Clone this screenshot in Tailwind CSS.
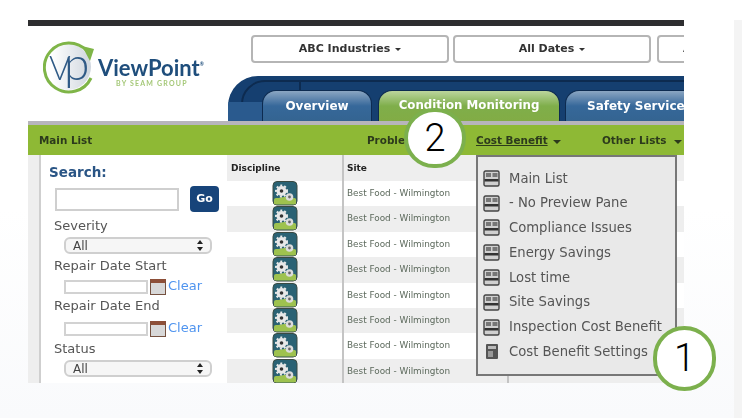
<!DOCTYPE html>
<html>
<head>
<meta charset="utf-8">
<script src="https://cdn.jsdelivr.net/npm/@tailwindcss/browser@4"></script>
</head>
<body class="w-[742px] h-[418px] overflow-hidden relative bg-gradient-to-b from-white via-white to-[#f9fafc] font-['DejaVu_Sans',sans-serif]">
<div class="flex pt-[20px] pl-[28px] h-full">
  <!-- screenshot -->
  <div class="w-[656px] h-[363px] overflow-hidden bg-white flex flex-col blur-[0.6px] relative shrink-0">
    <div class="h-[6px] bg-[#2e2e30] shrink-0"></div>
    <!-- header -->
    <div class="h-[95px] flex shrink-0">
      <div class="w-[200px] shrink-0 pl-[15px] pt-[14px]">
        <svg width="170" height="56" viewBox="0 0 170 56">
          <defs><linearGradient id="lg" x1="0" x2="1" y1="0" y2="0"><stop offset="0.15" stop-color="#ffffff"/><stop offset="1" stop-color="#cfd6de"/></linearGradient></defs>
          <circle cx="25" cy="27" r="23" fill="url(#lg)"/>
          <path d="M44 11 A24.5 24.5 0 1 0 48 38" fill="none" stroke="#7fb548" stroke-width="3"/>
          <path d="M39 6 L51 9 L47 21 Z" fill="#7fb548"/>
          <text x="6" y="40" font-family="Lato" font-weight="300" font-size="33" fill="#2f5a86">V</text>
          <text x="21" y="40" font-family="Lato" font-weight="300" font-size="46" fill="#2f5a86">p</text>
          <text x="55" y="36" font-family="Lato" font-weight="700" font-size="22" fill="#1f4e7c">ViewPoint<tspan font-size="5" dy="-10">®</tspan></text>
          <text x="73" y="46" font-family="Lato" font-weight="700" font-size="7" letter-spacing="1.2" fill="#a5c878">BY SEAM GROUP</text>
        </svg>
      </div>
      <div class="flex-1 min-w-0 flex flex-col">
        <div class="flex gap-[4px] pl-[23px] pt-[9px]">
          <div class="w-[198px] h-[28px] pt-[1px] shrink-0 border-2 border-[#b5b5b5] rounded-[4px] flex items-center justify-center gap-[5px] text-[11px] font-bold text-[#333]">ABC Industries<span class="w-0 h-0 border-x-[3px] border-x-transparent border-t-[3px] border-t-[#333]"></span></div>
          <div class="w-[198px] h-[28px] pt-[1px] shrink-0 border-2 border-[#b5b5b5] rounded-[4px] flex items-center justify-center gap-[5px] text-[11px] font-bold text-[#333]">All Dates<span class="w-0 h-0 border-x-[3px] border-x-transparent border-t-[3px] border-t-[#333]"></span></div>
          <div class="w-[100px] h-[28px] pt-[1px] shrink-0 ml-[2px] border-2 border-[#b5b5b5] rounded-[4px] flex items-center pl-[24px] text-[11px] font-bold text-[#333] whitespace-nowrap">All</div>
        </div>
        <div class="mt-[13px] flex-1 bg-[#153f70] rounded-tl-[30px] relative overflow-hidden">
          <div class="absolute left-[13px] top-[4px] w-[60px] h-[60px] border-2 border-[#0d2b50] rounded-tl-[24px]"></div>
          <div class="absolute left-0 right-0 top-[4px] h-[2px] bg-[#0d2b50] ml-[36px]"></div>
          <div class="absolute left-0 bottom-0 w-[36px] h-[19px] bg-[#2a5a8e]"></div>
          <div class="absolute left-[34px] bottom-0 flex items-end w-[460px]">
            <div class="w-[110px] h-[31px] shrink-0 rounded-t-[14px] border border-[#0d2b50] border-b-0 bg-gradient-to-b from-[#8ba6c2] via-[#36689a] to-[#346491] flex items-center justify-center text-white text-[12px] font-bold">Overview</div>
            <div class="w-[182px] h-[31px] ml-[6px] shrink-0 rounded-t-[14px] border border-[#0d2b50] border-b-0 bg-gradient-to-b from-[#bcd59c] via-[#7fae4a] to-[#82ac45] flex items-center justify-center text-white text-[11.8px] font-bold">Condition Monitoring</div>
            <div class="w-[150px] h-[31px] ml-[5px] shrink-0 rounded-t-[14px] border border-[#0d2b50] border-b-0 bg-gradient-to-b from-[#8ba6c2] via-[#36689a] to-[#346491] flex items-center pl-[21px] text-white text-[12px] font-bold whitespace-nowrap">Safety Services</div>
          </div>
        </div>
      </div>
    </div>
    <!-- green bar -->
    <div class="h-[4px] bg-[#b7b5bb] shrink-0"></div>
    <div class="h-[30px] bg-[#8eb935] shrink-0 relative flex items-center pl-[11px] pt-[2px] text-[10.4px] font-bold text-[#2c3a1c]">
      <span>Main List</span>
      <span class="absolute left-[339px]">Problems</span>
      <span class="absolute left-[448px] underline">Cost Benefit</span>
      <span class="absolute left-[525px] top-[15px] w-0 h-0 border-x-[4px] border-x-transparent border-t-[4px] border-t-[#2c3a1c]"></span>
      <span class="absolute left-[574px]">Other Lists</span>
      <span class="absolute left-[646px] top-[15px] w-0 h-0 border-x-[4px] border-x-transparent border-t-[4px] border-t-[#2c3a1c]"></span>
    </div>
    <!-- body -->
    <div class="flex-1 flex min-h-0">
      <div class="w-[13px] bg-[#eeeeee] border-r-2 border-[#cfcfcf] shrink-0"></div>
      <aside class="w-[186px] shrink-0 pl-[13px] pt-[8px] text-[13px] text-[#555] leading-[16px] overflow-hidden">
        <div class="text-[13.5px] font-bold text-[#2a5585] leading-[18px] ml-[-5px]">Search:</div>
        <div class="flex items-center gap-[11px] mt-[5px] h-[26px] ml-[1px]">
          <div class="w-[124px] h-[23px] border-2 border-[#cfcfcf] bg-white shrink-0"></div>
          <div class="w-[29px] h-[26px] rounded-[4px] bg-[#17447a] text-white text-[11px] font-bold flex items-center justify-center shrink-0">Go</div>
        </div>
        <div class="mt-[6px]">Severity</div>
        <div class="ml-[10px] mt-[3px] w-[148px] h-[17px] rounded-[6px] border-2 border-[#cfcfcf] bg-[#f6f6f6] flex items-center justify-between px-[7px] text-[12px] text-[#444]"><span>All</span><svg width="6" height="11"><path d="M3 0 L6 4 H0 Z M3 11 L6 7 H0 Z" fill="#222"/></svg></div>
        <div class="mt-[4px]">Repair Date Start</div>
        <div class="ml-[10px] mt-[4px] flex items-center h-[17px]">
          <div class="w-[84px] h-[14px] border-2 border-[#d2d2d2] bg-white shrink-0"></div>
          <div class="w-[16px] h-[16px] ml-[2px] shrink-0 border border-[#75513f] bg-[#d8d8d8] border-t-[4px] border-t-[#8d4f38]"></div>
          <span class="ml-[2px] mb-[2px] text-[#4f94ef] text-[13px] leading-[14px]">Clear</span>
        </div>
        <div class="mt-[3px]">Repair Date End</div>
        <div class="ml-[10px] mt-[6px] flex items-center h-[17px]">
          <div class="w-[84px] h-[14px] border-2 border-[#d2d2d2] bg-white shrink-0"></div>
          <div class="w-[16px] h-[16px] ml-[2px] shrink-0 border border-[#75513f] bg-[#d8d8d8] border-t-[4px] border-t-[#8d4f38]"></div>
          <span class="ml-[2px] mb-[2px] text-[#4f94ef] text-[13px] leading-[14px]">Clear</span>
        </div>
        <div class="mt-[4px]">Status</div>
        <div class="ml-[10px] mt-[3px] w-[148px] h-[17px] rounded-[6px] border-2 border-[#cfcfcf] bg-[#f6f6f6] flex items-center justify-between px-[7px] text-[12px] text-[#444]"><span>All</span><svg width="6" height="11"><path d="M3 0 L6 4 H0 Z M3 11 L6 7 H0 Z" fill="#222"/></svg></div>
      </aside>
      <!-- table -->
      <div class="flex-1 min-w-0 flex flex-col text-[#555]">
        <div class="h-[26px] bg-[#eeeeee] flex text-[9px] font-bold text-[#222] shrink-0">
          <div class="w-[117px] border-r-2 border-[#c4c4c4] pl-[4px] pt-[7px]">Discipline</div>
          <div class="pl-[3px] pt-[7px]">Site</div>
        </div>
        <div class="grid grid-cols-[117px_165px_1fr] auto-rows-[25.4px] text-[8.9px] text-[#5d6a5d]">
          <div class="border-r-2 border-[#c4c4c4] flex justify-center bg-white"><svg width="26" height="25"><use href="#gear"/></svg></div><div class="bg-white pl-[3px] border-r-2 border-[#c4c4c4] flex items-center">Best Food - Wilmington</div><div class="bg-white"></div>
          <div class="border-r-2 border-[#c4c4c4] flex justify-center bg-[#eeeeee]"><svg width="26" height="25"><use href="#gear"/></svg></div><div class="bg-[#eeeeee] pl-[3px] border-r-2 border-[#c4c4c4] flex items-center">Best Food - Wilmington</div><div class="bg-[#eeeeee]"></div>
          <div class="border-r-2 border-[#c4c4c4] flex justify-center bg-white"><svg width="26" height="25"><use href="#gear"/></svg></div><div class="bg-white pl-[3px] border-r-2 border-[#c4c4c4] flex items-center">Best Food - Wilmington</div><div class="bg-white"></div>
          <div class="border-r-2 border-[#c4c4c4] flex justify-center bg-[#eeeeee]"><svg width="26" height="25"><use href="#gear"/></svg></div><div class="bg-[#eeeeee] pl-[3px] border-r-2 border-[#c4c4c4] flex items-center">Best Food - Wilmington</div><div class="bg-[#eeeeee]"></div>
          <div class="border-r-2 border-[#c4c4c4] flex justify-center bg-white"><svg width="26" height="25"><use href="#gear"/></svg></div><div class="bg-white pl-[3px] border-r-2 border-[#c4c4c4] flex items-center">Best Food - Wilmington</div><div class="bg-white"></div>
          <div class="border-r-2 border-[#c4c4c4] flex justify-center bg-[#eeeeee]"><svg width="26" height="25"><use href="#gear"/></svg></div><div class="bg-[#eeeeee] pl-[3px] border-r-2 border-[#c4c4c4] flex items-center">Best Food - Wilmington</div><div class="bg-[#eeeeee]"></div>
          <div class="border-r-2 border-[#c4c4c4] flex justify-center bg-white"><svg width="26" height="25"><use href="#gear"/></svg></div><div class="bg-white pl-[3px] border-r-2 border-[#c4c4c4] flex items-center">Best Food - Wilmington</div><div class="bg-white"></div>
          <div class="border-r-2 border-[#c4c4c4] flex justify-center bg-[#eeeeee]"><svg width="26" height="25"><use href="#gear"/></svg></div><div class="bg-[#eeeeee] pl-[3px] border-r-2 border-[#c4c4c4] flex items-center">Best Food - Wilmington</div><div class="bg-[#eeeeee]"></div>
        </div>
      </div>
    </div>
    <!-- dropdown -->
    <div class="absolute left-[448px] top-[135px] w-[201px] h-[221px] bg-[#e9e9e9] border-2 border-[#777] pt-[9px] pl-[5px] flex flex-col text-[13.2px] text-[#555] z-10">
      <div class="h-[24.8px] flex items-center gap-[9px] shrink-0"><svg width="17" height="17"><use href="#list"/></svg>Main List</div>
      <div class="h-[24.8px] flex items-center gap-[9px] shrink-0"><svg width="17" height="17"><use href="#list"/></svg>- No Preview Pane</div>
      <div class="h-[24.8px] flex items-center gap-[9px] shrink-0"><svg width="17" height="17"><use href="#list"/></svg>Compliance Issues</div>
      <div class="h-[24.8px] flex items-center gap-[9px] shrink-0"><svg width="17" height="17"><use href="#list"/></svg>Energy Savings</div>
      <div class="h-[24.8px] flex items-center gap-[9px] shrink-0"><svg width="17" height="17"><use href="#list"/></svg>Lost time</div>
      <div class="h-[24.8px] flex items-center gap-[9px] shrink-0"><svg width="17" height="17"><use href="#list"/></svg>Site Savings</div>
      <div class="h-[24.8px] flex items-center gap-[9px] shrink-0 whitespace-nowrap"><svg width="17" height="17"><use href="#list"/></svg>Inspection Cost Benefit</div>
      <div class="h-[24.8px] flex items-center gap-[9px] shrink-0 whitespace-nowrap"><svg width="17" height="17"><rect x="3" y="1" width="12" height="15" rx="1" fill="#555"/><rect x="5" y="3" width="8" height="3" fill="#bbb"/><rect x="5" y="8" width="5" height="6" fill="#999"/></svg>Cost Benefit Settings</div>
    </div>
  </div>
  <div class="ml-[50px] w-[8px] bg-[#f4f4f4] shrink-0"></div>
</div>

<!-- numbered badges -->
<div class="absolute left-[404px] top-[108px] w-[62px] h-[60px] rounded-full bg-white border-[4px] border-[#7cb04d] flex items-center justify-center text-[38px] text-black font-['Roboto',sans-serif] font-light z-20">2</div>
<div class="absolute left-[653px] top-[326px] w-[63px] h-[65px] rounded-full bg-white border-[4px] border-[#7cb04d] flex items-center justify-center text-[38px] text-black font-['Roboto',sans-serif] font-light z-20">1</div>

<svg width="0" height="0" class="absolute">
  <defs>
    <g id="gear">
      <rect x="1" y="0.5" width="24" height="23.5" rx="4" fill="#2a6274" stroke="#3a4a42"/>
      <rect x="2" y="17" width="22" height="6.5" rx="2" fill="#9ec24f"/>
      <path d="M2 19 Q14 13 24 18 V23 H2 Z" fill="#9ec24f"/>
      <circle cx="9.5" cy="10" r="5" fill="#e8e8e8"/>
      <circle cx="9.5" cy="10" r="5.5" fill="none" stroke="#e8e8e8" stroke-width="2" stroke-dasharray="2 2"/>
      <circle cx="9.5" cy="10" r="1.8" fill="#333"/>
      <circle cx="17.5" cy="16" r="3.8" fill="#dcdcdc"/>
      <circle cx="17.5" cy="16" r="1.4" fill="#666"/>
    </g>
    <g id="list">
      <rect x="1" y="1" width="15" height="15" rx="1.5" fill="#d0d0d0" stroke="#444" stroke-width="1.4"/>
      <rect x="3" y="3" width="5" height="4" fill="#777"/>
      <rect x="9.5" y="3" width="5" height="4" fill="#777"/>
      <rect x="1.5" y="9" width="14" height="2.5" fill="#333"/>
    </g>
  </defs>
</svg>
</body>
</html>
